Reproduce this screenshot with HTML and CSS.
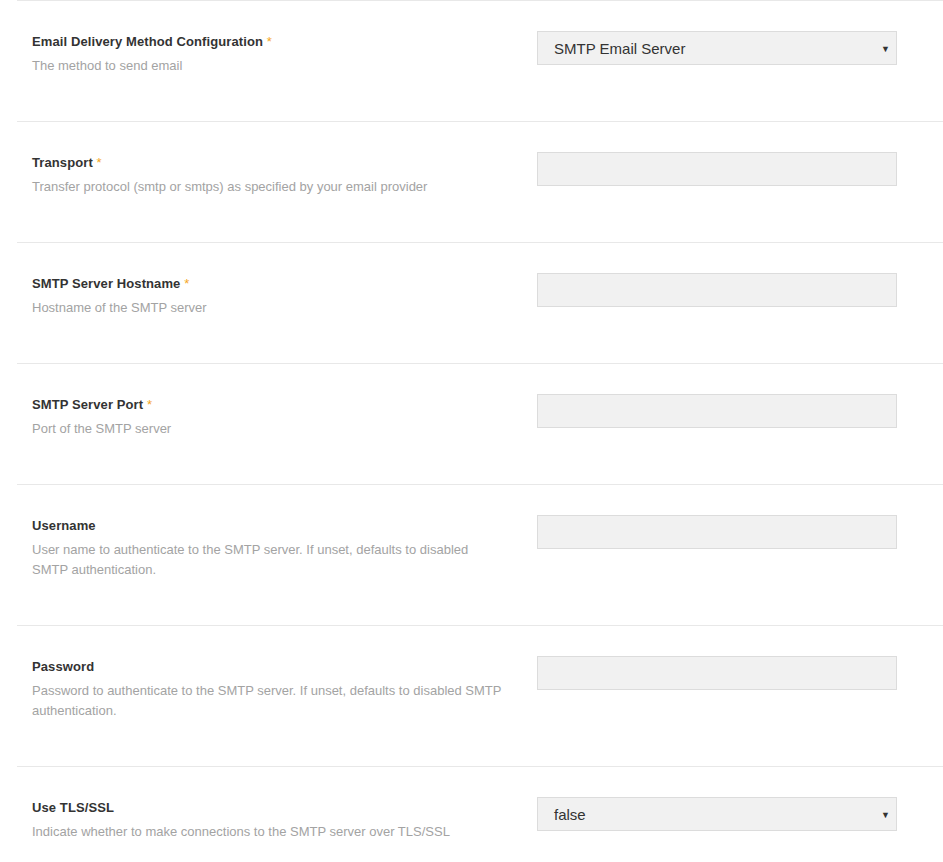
FILE: index.html
```html
<!DOCTYPE html>
<html>
<head>
<meta charset="utf-8">
<link rel="stylesheet" href="styles.css">
</head>
<body>
<div class="form">
  <div class="row">
    <div class="info">
      <div class="label">Email Delivery Method Configuration <span class="req">*</span></div>
      <div class="desc">The method to send email</div>
    </div>
    <div class="field select"><span>SMTP Email Server</span><span class="arrow">▼</span></div>
  </div>
  <div class="row">
    <div class="info">
      <div class="label">Transport <span class="req">*</span></div>
      <div class="desc">Transfer protocol (smtp or smtps) as specified by your email provider</div>
    </div>
    <div class="field"></div>
  </div>
  <div class="row">
    <div class="info">
      <div class="label">SMTP Server Hostname <span class="req">*</span></div>
      <div class="desc">Hostname of the SMTP server</div>
    </div>
    <div class="field"></div>
  </div>
  <div class="row">
    <div class="info">
      <div class="label">SMTP Server Port <span class="req">*</span></div>
      <div class="desc">Port of the SMTP server</div>
    </div>
    <div class="field"></div>
  </div>
  <div class="row">
    <div class="info">
      <div class="label">Username</div>
      <div class="desc">User name to authenticate to the SMTP server. If unset, defaults to disabled SMTP authentication.</div>
    </div>
    <div class="field"></div>
  </div>
  <div class="row">
    <div class="info">
      <div class="label">Password</div>
      <div class="desc">Password to authenticate to the SMTP server. If unset, defaults to disabled SMTP authentication.</div>
    </div>
    <div class="field"></div>
  </div>
  <div class="row">
    <div class="info">
      <div class="label">Use TLS/SSL</div>
      <div class="desc">Indicate whether to make connections to the SMTP server over TLS/SSL</div>
    </div>
    <div class="field select"><span>false</span><span class="arrow">▼</span></div>
  </div>
</div>
</body>
</html>
```
FILE: styles.css
```css
html, body {
  margin: 0;
  padding: 0;
  background: #fff;
  overflow: hidden;
}
body {
  font-family: "Liberation Sans", Arial, sans-serif;
}
.form {
  margin-left: 17px;
}
.row {
  display: grid;
  grid-template-columns: 472px 360px;
  column-gap: 33px;
  align-items: start;
  border-top: 1px solid #e8e8e8;
  padding: 30px 0 45px 15px;
}
.info {
  margin-top: 1px;
}
.label {
  font-size: 13px;
  font-weight: bold;
  line-height: 20px;
  color: #333;
  letter-spacing: 0.1px;
}
.req {
  color: #f5a623;
  font-weight: normal;
}
.desc {
  margin-top: 4px;
  font-size: 13px;
  line-height: 20px;
  color: #a3a3a3;
}
.field {
  box-sizing: border-box;
  height: 34px;
  background: #f1f1f1;
  border: 1px solid #dcdcdc;
}
.select {
  display: flex;
  align-items: center;
  justify-content: space-between;
  padding: 1px 6px 0 16px;
  font-size: 15px;
  color: #333;
}
.arrow {
  font-size: 9px;
  color: #333;
}
```
